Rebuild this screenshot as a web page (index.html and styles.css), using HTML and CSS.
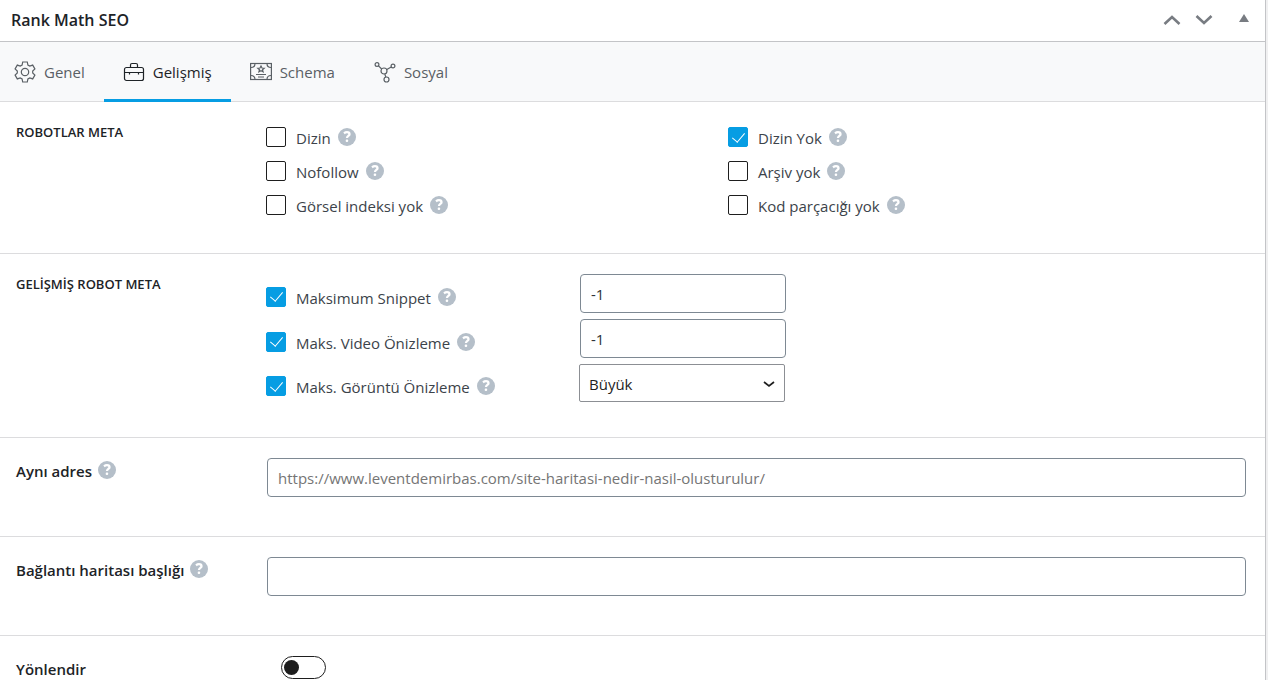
FILE: index.html
```html
<!DOCTYPE html>
<html lang="tr">
<head>
<meta charset="utf-8">
<meta name="viewport" content="width=device-width, initial-scale=1">
<title>Rank Math SEO</title>
<link rel="stylesheet" href="styles.css">
</head>
<body>
<svg class="sprite" aria-hidden="true">
  <symbol id="help" viewBox="0 0 18 18">
    <circle cx="9" cy="9" r="9" fill="#b5bfc9"/>
    <path d="M6 5.300C7 4.500 8 4.200 9 4.200c1.600 0 2.500.8 2.500 2 0 1.800-2.500 1.700-2.500 3.800" fill="none" stroke="#fff" stroke-width="2.300"/>
    <rect x="7.700" y="11.500" width="2.500" height="2.500" rx="1" fill="#fff"/>
  </symbol>
</svg>
<main class="postbox">
  <header class="postbox-header">
    <h1 class="title">Rank Math SEO</h1>
    <div class="actions">
      <button class="action" type="button" aria-label="Yukarı taşı"><svg width="18" height="12" viewBox="0 0 18 12"><path d="M1.500 10 9 3l7.500 7" fill="none" stroke="#787c82" stroke-width="2.600"/></svg></button>
      <button class="action" type="button" aria-label="Aşağı taşı"><svg width="18" height="12" viewBox="0 0 18 12"><path d="M1.500 2 9 9l7.500-7" fill="none" stroke="#787c82" stroke-width="2.600"/></svg></button>
      <button class="action action-toggle" type="button" aria-label="Paneli aç/kapat"><svg width="10" height="12" viewBox="0 0 10 12"><path d="M0 8h10L5 0z" fill="#787c82"/></svg></button>
    </div>
  </header>
  <nav class="tabs">
    <a class="tab" href="#genel"><svg width="22" height="22" viewBox="0 0 22 22"><path d="M8.700 1h4.600l.6 3 1.900 1.100 2.900-1 2.200 3.900-2.200 2v2l2.200 2-2.200 3.900-2.900-1-1.900 1.100-.6 3H8.700l-.6-3-1.900-1.100-2.900 1L1.100 14l2.200-2v-2l-2.200-2 2.200-3.900 2.900 1L8.100 4z"/><circle cx="11" cy="11" r="3.700"/></svg>Genel</a>
    <a class="tab active" href="#gelismis"><svg width="22" height="22" viewBox="0 0 22 22"><rect x="1.500" y="6.500" width="19" height="13" rx="2"/><path d="M7.500 6.500V4c0-1 .5-1.500 1.500-1.500h4c1 0 1.500.5 1.500 1.500v2.500M1.500 11.500h19M6.500 11.500v2M15.500 11.500v2"/></svg>Gelişmiş</a>
    <a class="tab tab-schema" href="#schema"><svg width="22" height="22" viewBox="0 0 22 22"><rect x="0.600" y="2.500" width="20.800" height="16"/><path d="M1 6.500c2.500 0 4-1.500 4-4M17 2.500c0 2.500 1.500 4 4 4M1 14.500c2.500 0 4 1.500 4 4M17 18.500c0-2.500 1.500-4 4-4M6 13.500h10M8 16h6M11 5l1 2 2.200.2-1.700 1.500.6 2.200L11 9.800l-2.100 1.100.6-2.200-1.700-1.500L10 7z"/></svg>Schema</a>
    <a class="tab" href="#sosyal"><svg width="22" height="22" viewBox="0 0 22 22"><circle cx="3" cy="3.500" r="1.900"/><circle cx="19" cy="5" r="1.900"/><circle cx="12.500" cy="18.500" r="2.500"/><circle cx="10" cy="10" r="3"/><path d="M4.500 4.800 7.700 8M12.800 8.600l4.400-2.500M10.800 13l1 3.100"/></svg>Sosyal</a>
  </nav>

  <section class="field robots">
    <h2 class="heading">ROBOTLAR META</h2>
    <div class="checks">
      <div class="check"><input class="box" type="checkbox" id="index"><label for="index">Dizin</label><svg class="help"><use href="#help"/></svg></div>
      <div class="check"><input class="box" type="checkbox" id="noindex" checked><label for="noindex">Dizin Yok</label><svg class="help"><use href="#help"/></svg></div>
      <div class="check"><input class="box" type="checkbox" id="nofollow"><label for="nofollow">Nofollow</label><svg class="help"><use href="#help"/></svg></div>
      <div class="check"><input class="box" type="checkbox" id="noarchive"><label for="noarchive">Arşiv yok</label><svg class="help"><use href="#help"/></svg></div>
      <div class="check"><input class="box" type="checkbox" id="noimage"><label for="noimage">Görsel indeksi yok</label><svg class="help"><use href="#help"/></svg></div>
      <div class="check"><input class="box" type="checkbox" id="nosnippet"><label for="nosnippet">Kod parçacığı yok</label><svg class="help"><use href="#help"/></svg></div>
    </div>
  </section>

  <section class="field advanced">
    <h2 class="heading">GELİŞMİŞ ROBOT META</h2>
    <div class="limits">
      <div class="check"><input class="box" type="checkbox" id="maxsnippet" checked><label for="maxsnippet">Maksimum Snippet</label><svg class="help"><use href="#help"/></svg></div>
      <input class="text" type="text" value="-1" aria-label="Maksimum Snippet">
      <div class="check"><input class="box" type="checkbox" id="maxvideo" checked><label for="maxvideo">Maks. Video Önizleme</label><svg class="help"><use href="#help"/></svg></div>
      <input class="text" type="text" value="-1" aria-label="Maks. Video Önizleme">
      <div class="check"><input class="box" type="checkbox" id="maximage" checked><label for="maximage">Maks. Görüntü Önizleme</label><svg class="help"><use href="#help"/></svg></div>
      <div class="select-wrap">
        <select class="select" aria-label="Maks. Görüntü Önizleme"><option>Büyük</option></select>
        <svg class="chevron" width="12" height="8" viewBox="0 0 12 8"><path d="M1 2l5 4 5-4" fill="none" stroke="#1e1e1e" stroke-width="1.700"/></svg>
      </div>
    </div>
  </section>

  <section class="field">
    <div class="name"><label for="canonical">Aynı adres</label><svg class="help"><use href="#help"/></svg></div>
    <input class="text" id="canonical" type="text" placeholder="https://www.leventdemirbas.com/site-haritasi-nedir-nasil-olusturulur/">
  </section>

  <section class="field">
    <div class="name"><label for="breadcrumb">Bağlantı haritası başlığı</label><svg class="help"><use href="#help"/></svg></div>
    <input class="text" id="breadcrumb" type="text">
  </section>

  <section class="field">
    <div class="name"><label for="redirect">Yönlendir</label></div>
    <input class="switch" id="redirect" type="checkbox" role="switch">
  </section>
</main>
</body>
</html>
```
FILE: styles.css
```css
* { box-sizing: border-box; }

html { height: 100%; overflow: hidden; }

body {
  margin: 0;
  height: 100%;
  overflow: hidden;
  display: flex;
  padding-right: 2px;
  background: #f0f0f1;
  color: #3c434a;
  font: 15px/20px "Open Sans", "Noto Sans", sans-serif;
}

input, select, button { font: inherit; margin: 0; }

.sprite { position: absolute; width: 0; height: 0; }

.postbox {
  flex: 1;
  overflow: hidden;
  background: #fff;
  border-right: 1px solid #c3c4c7;
}

.postbox-header {
  display: flex;
  align-items: center;
  justify-content: space-between;
  height: 42px;
  padding: 0 16px 2px 11px;
  border-bottom: 1px solid #c3c4c7;
}

.title {
  margin: 0;
  font-size: 16px;
  font-weight: 600;
  color: #1d2327;
}

.actions { display: flex; align-items: center; gap: 14px; }

.action {
  display: flex;
  padding: 0;
  border: 0;
  background: none;
}

.action-toggle { margin-left: 12px; }

.tabs {
  display: flex;
  height: 60px;
  background: #f8f9fa;
  border-bottom: 1px solid #dcdcde;
}

.tab {
  display: flex;
  align-items: center;
  gap: 8px;
  height: 60px;
  padding: 3px 19px 0;
  border-bottom: 3px solid transparent;
  color: #5a6065;
  text-decoration: none;
}

.tab:first-child { padding-left: 14px; }

.tab-schema { padding-right: 20px; }

.tab svg { fill: none; stroke: currentColor; stroke-width: 1.200; }

.tab.active { color: #1e2327; border-bottom-color: #069de3; }

.field {
  display: grid;
  grid-template-columns: 251px 1fr;
  padding: 20px 19px 39px 16px;
  border-bottom: 1px solid #dcdcde;
}

.heading {
  margin: 0;
  font-size: 13px;
  font-weight: 600;
  color: #1d2327;
}

.checks {
  display: grid;
  grid-template-columns: 462px 1fr;
  grid-auto-rows: 34px;
  margin-left: -1px;
}

.robots { padding-top: 18px; padding-bottom: 31px; }

.robots .heading { padding-top: 2px; }

.check { display: flex; align-items: center; }

.check label { padding: 2px 7px 0 10px; }

.help { flex: none; width: 18px; height: 18px; }

.box {
  appearance: none;
  display: grid;
  place-items: center;
  flex: none;
  width: 20px;
  height: 20px;
  border: 1px solid #1e1e1e;
  border-radius: 2px;
  background: #fff;
}

.box:checked { background: #069de3; border-color: #069de3; }

.box:checked::after {
  content: "";
  width: 6px;
  height: 11px;
  margin-bottom: 3px;
  border: solid #fff;
  border-width: 0 1px 1px 0;
  transform: rotate(40deg);
}

.advanced { padding-bottom: 35px; }

.limits {
  display: grid;
  grid-template-columns: 314px 206px;
  row-gap: 6px;
  margin-left: -1px;
}

.limits .check { padding-top: 6px; }

.text {
  width: 100%;
  height: 39px;
  padding: 0 10px;
  border: 1px solid #7e8993;
  border-radius: 4px;
  background: #fff;
  color: #2c3338;
}

.text::placeholder { color: #757575; opacity: 1; }

.select-wrap { position: relative; margin: 0 1px 0 -1px; width: 206px; }

.select {
  appearance: none;
  display: block;
  width: 100%;
  height: 38px;
  padding: 2px 9px 0;
  border: 1px solid #8c8f94;
  border-radius: 2px;
  background: #fff;
  color: #1e1e1e;
}

.chevron { position: absolute; right: 10px; top: 16px; pointer-events: none; }

.name {
  display: flex;
  align-items: flex-start;
  gap: 6px;
  padding-top: 3px;
  font-weight: 600;
  color: #1d2327;
}

.switch {
  appearance: none;
  display: flex;
  align-items: center;
  width: 45px;
  height: 23px;
  margin-left: 14px;
  padding: 0 2px;
  border: 1px solid #1e1e1e;
  border-radius: 12px;
  background: #fff;
}

.switch::before {
  content: "";
  width: 15px;
  height: 15px;
  border-radius: 50%;
  background: #1e1e1e;
}

.switch:checked { justify-content: flex-end; }
```
